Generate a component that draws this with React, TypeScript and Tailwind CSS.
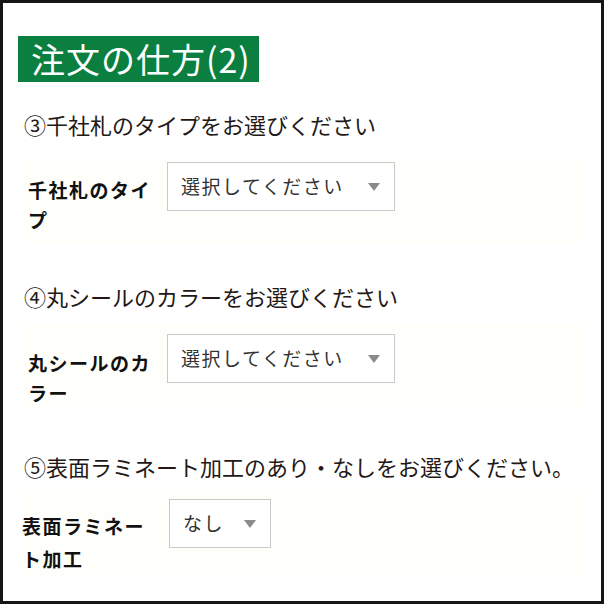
import React from 'react'

type Row = {
  heading: string
  label: string
  value: string
  rowCls: string
  headCls: string
  labelCls: string
  selectCls: string
}

const rows: Row[] = [
  {
    heading: '③千社札のタイプをお選びください',
    label: '千社札のタイプ',
    value: '選択してください',
    headCls: 'mt-[27px]',
    rowCls: 'mt-[21px] h-[83px] pt-[2px] pl-[7px]',
    labelCls: 'w-[132px] mt-[13px] leading-[30px]',
    selectCls: 'w-[228px]',
  },
  {
    heading: '④丸シールのカラーをお選びください',
    label: '丸シールのカラー',
    value: '選択してください',
    headCls: 'mt-[38px]',
    rowCls: 'mt-[12px] h-[85px] pt-[11px] pl-[7px]',
    labelCls: 'w-[132px] mt-[14px] leading-[30px]',
    selectCls: 'w-[228px]',
  },
  {
    heading: '⑤表面ラミネート加工のあり・なしをお選びください。',
    label: '表面ラミネート加工',
    value: 'なし',
    headCls: 'mt-[43px]',
    rowCls: 'mt-[9px] h-[87px] pt-[9px] pl-[1px]',
    labelCls: 'w-[140px] mt-[10px] leading-[33px]',
    selectCls: 'w-[102px]',
  },
]

function Select({ value, cls }: { value: string; cls: string }) {
  return (
    <div className={`${cls} h-[49px] shrink-0 border border-[#c9c9c9] bg-white flex items-center pl-[13px] pr-[14px] justify-between`}>
      <span className="text-[19px] tracking-[1.5px] text-[#333]">{value}</span>
      <span className="w-0 h-0 border-l-[6px] border-r-[6px] border-t-[8px] border-l-transparent border-r-transparent border-t-[#8a8a8a]" />
    </div>
  )
}

export default function App() {
  return (
    <div
      className="w-[604px] h-[604px] border-[3px] border-[#151515] bg-white overflow-hidden"
      style={{ fontFamily: '"Noto Sans CJK JP", "Noto Sans", sans-serif' }}
    >
      <div className="ml-[15px] mt-[33px] flex w-[241px] h-[46px] items-center bg-[#0a7f3f] pl-[13px] text-[34px] tracking-[1px] leading-none text-white">
        注文の仕方(2)
      </div>
      {rows.map(r => (
        <div key={r.heading}>
          <div className={`${r.headCls} ml-[21px] text-[22px] leading-[30px] text-[#231815]`}>{r.heading}</div>
          <div className={`${r.rowCls} ml-[18px] w-[565px] bg-[#fefefb] flex items-start gap-[7px]`}>
            <div className={`${r.labelCls} shrink-0 text-[19px] font-bold tracking-[1.5px] text-[#111]`}>{r.label}</div>
            <Select value={r.value} cls={r.selectCls} />
          </div>
        </div>
      ))}
    </div>
  )
}
